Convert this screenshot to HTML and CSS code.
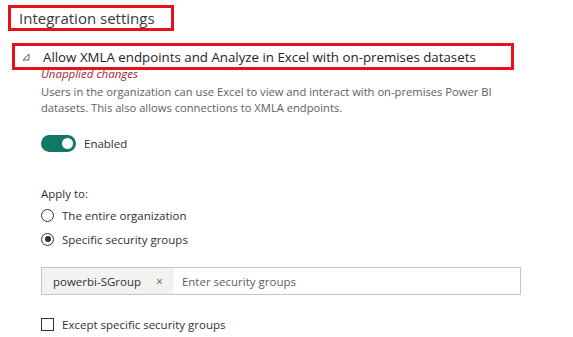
FILE: index.html
```html
<!DOCTYPE html>
<html lang="en">
<head>
  <meta charset="UTF-8">
  <title>Integration settings</title>
  <link rel="stylesheet" href="styles.css">
</head>
<body>
  <div class="page">
    <h2 class="section-title">Integration settings</h2>

    <div class="setting">
      <div class="setting-head">
        <svg class="caret" width="8" height="8" viewBox="0 0 8 8">
          <polygon points="7,1 7,7 1,7" fill="none" stroke="#605e5c" stroke-width="1"/>
        </svg>
        <span class="setting-name">Allow XMLA endpoints and Analyze in Excel with on-premises datasets</span>
      </div>
      <div class="setting-body">
        <div class="unapplied">Unapplied changes</div>
        <p class="desc">Users in the organization can use Excel to view and interact with on-premises Power BI datasets. This also allows connections to XMLA endpoints.</p>

        <div class="toggle-row">
          <span class="toggle"><span class="thumb"></span></span>
          <span>Enabled</span>
        </div>

        <div class="apply-label">Apply to:</div>
        <div class="radio-group">
          <div class="radio-row">
            <span class="radio"></span>
            <span>The entire organization</span>
          </div>
          <div class="radio-row">
            <span class="radio checked"></span>
            <span>Specific security groups</span>
          </div>
        </div>

        <div class="picker">
          <span class="chip">powerbi-SGroup <span class="chip-x">&#215;</span></span>
          <span class="placeholder">Enter security groups</span>
        </div>

        <div class="check-row">
          <span class="checkbox"></span>
          <span>Except specific security groups</span>
        </div>
      </div>
    </div>
  </div>
</body>
</html>
```

FILE: styles.css
```css
body {
  margin: 0;
  background: #fff;
  font-family: "Open Sans", "Noto Sans", sans-serif;
  color: #323130;
}

.page {
  padding: 5px 0 0 8px;
}

.section-title {
  display: inline-block;
  margin: 0;
  padding: 0 16px 0 8px;
  border: 3px solid #e8101a;
  font-size: 15px;
  font-weight: 400;
  line-height: 20px;
  color: #3b3a39;
}

.setting {
  margin-top: 12px;
}

.setting-head {
  display: flex;
  align-items: center;
  width: 496px;
  margin-left: 4px;
  height: 21px;
  border: 3px solid #e8101a;
  font-size: 13.3px;
  color: #252423;
}

.caret {
  margin: 0 13px 0 7px;
}

.setting-body {
  padding-left: 33px;
}

.unapplied {
  margin-top: -3px;
  font-size: 11.5px;
  font-style: italic;
  color: #a4262c;
  line-height: 13px;
}

.desc {
  margin: 4px 0 0;
  width: 475px;
  font-size: 11.2px;
  line-height: 16px;
  color: #605e5c;
}

.toggle-row,
.radio-row,
.check-row {
  display: flex;
  align-items: center;
  gap: 8px;
  font-size: 11.5px;
}

.toggle-row {
  margin-top: 19px;
}

.toggle {
  display: flex;
  align-items: center;
  justify-content: flex-end;
  width: 35px;
  height: 17px;
  padding: 0 3px;
  box-sizing: border-box;
  border-radius: 9px;
  background: #117865;
}

.thumb {
  width: 11px;
  height: 11px;
  border-radius: 50%;
  background: #fff;
}

.apply-label {
  margin-top: 34px;
  font-size: 11.5px;
  line-height: 16px;
}

.radio-group {
  display: flex;
  flex-direction: column;
  gap: 6px;
  margin-top: 4px;
}

.radio-row {
  height: 18px;
}

.radio {
  width: 13px;
  height: 13px;
  box-sizing: border-box;
  border: 1px solid #323130;
  border-radius: 50%;
  position: relative;
}

.radio.checked::after {
  content: "";
  position: absolute;
  left: 2.5px;
  top: 2.5px;
  width: 6px;
  height: 6px;
  border-radius: 50%;
  background: #323130;
}

.picker {
  display: flex;
  align-items: center;
  margin-top: 19px;
  width: 480px;
  height: 28px;
  box-sizing: border-box;
  border: 1px solid #c8c6c4;
  font-size: 11.5px;
}

.chip {
  display: flex;
  align-items: center;
  height: 26px;
  padding: 0 11px 0 11px;
  background: #f3f2f1;
  color: #323130;
}

.chip-x {
  margin-left: 15px;
  font-size: 12px;
  color: #605e5c;
}

.placeholder {
  margin-left: 8px;
  color: #605e5c;
}

.check-row {
  margin-top: 21px;
  height: 16px;
}

.checkbox {
  width: 13px;
  height: 13px;
  box-sizing: border-box;
  border: 1px solid #323130;
}
```
